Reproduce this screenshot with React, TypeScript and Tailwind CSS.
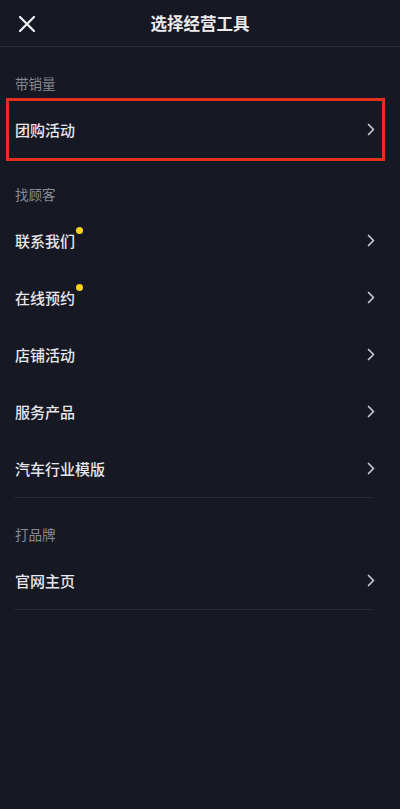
import React from "react";

const Chevron = () => (
  <svg width="8" height="13" viewBox="0 0 8 13" fill="none" className="shrink-0">
    <path d="M1.5 1.5L6.5 6.5L1.5 11.5" stroke="#c9cacf" strokeWidth="1.7" strokeLinecap="round" strokeLinejoin="round" />
  </svg>
);

const Row = ({ label, dot, boxed }: { label: string; dot?: boolean; boxed?: boolean }) => (
  <div className="relative flex h-[57px] items-center justify-between pl-[15px] pr-[25px]">
    <div className="relative flex items-center">
      <span className="text-[15px] font-medium leading-none text-[#e7e7ea]">{label}</span>
      {dot && (
        <span className="absolute -right-[8px] -top-[6px] h-[7px] w-[7px] rounded-full bg-[#f7d21e]" />
      )}
    </div>
    <Chevron />
    {boxed && (
      <div className="pointer-events-none absolute bottom-[-3px] left-[6px] right-[15px] top-[-3px] border-[3px] border-[#e3301d]" />
    )}
  </div>
);

const SectionLabel = ({ text }: { text: string }) => (
  <div className="flex h-[54px] items-end pb-[11px] pl-[15px]">
    <span className="text-[13.5px] leading-none text-[#8a8b93]">{text}</span>
  </div>
);

const Divider = () => <div className="ml-[14px] mr-[28px] h-px bg-[#272934]" />;

export default function App() {
  return (
    <div
      className="min-h-[809px] w-full bg-[#161823]"
      style={{ fontFamily: '"Noto Sans CJK SC", "Noto Sans", sans-serif' }}
    >
      <div className="relative flex h-[47px] items-center justify-center border-b border-[#2c2e39]">
        <svg width="18" height="18" viewBox="0 0 18 18" className="absolute left-[18px] top-[15px]">
          <path d="M2 2L16 16M16 2L2 16" stroke="#f2f2f4" strokeWidth="2.2" strokeLinecap="round" />
        </svg>
        <span className="text-[16.5px] font-bold leading-none text-[#ececef]">选择经营工具</span>
      </div>

      <SectionLabel text="带销量" />
      <Row label="团购活动" boxed />

      <SectionLabel text="找顾客" />
      <Row label="联系我们" dot />
      <Row label="在线预约" dot />
      <Row label="店铺活动" />
      <Row label="服务产品" />
      <Row label="汽车行业模版" />
      <Divider />

      <SectionLabel text="打品牌" />
      <Row label="官网主页" />
      <Divider />
    </div>
  );
}
